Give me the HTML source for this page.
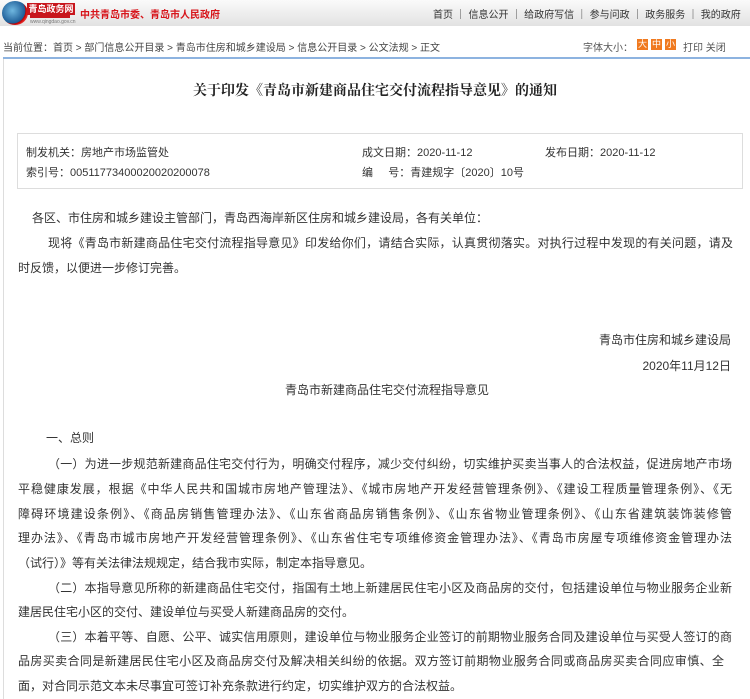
<!DOCTYPE html>
<html><head><meta charset="utf-8">
<style>
*{margin:0;padding:0;box-sizing:border-box}
body{width:750px;height:697px;overflow:hidden;background:#fff;font-family:"Liberation Sans","Noto Sans CJK SC",sans-serif;color:#333;position:relative}
.hdr{position:absolute;left:0;top:0;width:750px;height:26px;background:linear-gradient(#fafafa,#e2e2e2)}
.a{position:absolute;white-space:nowrap}
.ln{position:absolute;left:18px;width:714px;white-space:nowrap;font-size:12px;text-align:justify;text-align-last:justify;line-height:18px}
.s{position:absolute;white-space:nowrap;font-size:12px;line-height:18px}
</style></head><body>
<div class="hdr"></div>
<div class="a" style="left:2px;top:1px;width:26px;height:24px;border-radius:50%;background:radial-gradient(circle at 40% 40%,#6fb7e0,#1d5c96 60%,#b00 62%,#e33 75%,#fff 80%)"></div>
<div class="a" style="left:27px;top:3px;width:48px;height:12px;background:#c8161d;color:#fff;font-size:9px;font-weight:bold;line-height:12px;text-align:center">青岛政务网</div>
<div class="a" style="left:30px;top:15px;width:40px;height:3px;background:#c8161d"></div>
<div class="a" style="left:30px;top:19px;font-size:5px;color:#777">www.qingdao.gov.cn</div>
<div class="a" style="left:80px;top:6px;font-size:10px;font-weight:bold;color:#d7141a">中共青岛市委、青岛市人民政府</div>
<div class="a" style="left:433px;top:6px;font-size:10px;color:#333">首页 ｜ 信息公开 ｜ 给政府写信 ｜ 参与问政 ｜ 政务服务 ｜ 我的政府</div>
<div class="a" style="left:3px;top:39px;font-size:10px;color:#444">当前位置：首页 &gt; 部门信息公开目录 &gt; 青岛市住房和城乡建设局 &gt; 信息公开目录 &gt; 公文法规 &gt; 正文</div>
<div class="a" style="left:583px;top:39px;font-size:10px;color:#555">字体大小：</div>
<div class="a" style="left:637px;top:39px;width:11px;height:11px;background:#f07a20;color:#fff;font-size:9px;line-height:11px;text-align:center">大</div>
<div class="a" style="left:651px;top:39px;width:11px;height:11px;background:#f07a20;color:#fff;font-size:9px;line-height:11px;text-align:center">中</div>
<div class="a" style="left:665px;top:39px;width:11px;height:11px;background:#f07a20;color:#fff;font-size:9px;line-height:11px;text-align:center">小</div>
<div class="a" style="left:683px;top:39px;font-size:10px;color:#555">打印 关闭</div>
<div class="a" style="left:3px;top:57px;width:747px;height:2px;background:#8db3e0"></div>
<div class="a" style="left:3px;top:59px;width:1px;height:640px;background:#ddd"></div>
<div class="a" style="left:0;top:80px;width:750px;text-align:center;font-family:'Liberation Serif','Noto Serif CJK SC',serif;font-weight:bold;font-size:14px;color:#222">关于印发《青岛市新建商品住宅交付流程指导意见》的通知</div>
<div class="a" style="left:17px;top:133px;width:726px;height:56px;border:1px solid #ddd"></div>
<div class="a" style="left:26px;top:144px;font-size:11px;color:#333">制发机关：房地产市场监管处</div>
<div class="a" style="left:26px;top:164px;font-size:11px;color:#333">索引号：00511773400020020200078</div>
<div class="a" style="left:362px;top:144px;font-size:11px;color:#333">成文日期：2020-11-12</div>
<div class="a" style="left:362px;top:164px;font-size:11px;color:#333">编&nbsp;&nbsp;&nbsp;&nbsp;&nbsp;号：青建规字〔2020〕10号</div>
<div class="a" style="left:545px;top:144px;font-size:11px;color:#333">发布日期：2020-11-12</div>

<div class="s" style="left:32px;top:209px">各区、市住房和城乡建设主管部门，青岛西海岸新区住房和城乡建设局，各有关单位：</div>
<div class="ln" style="left:48px;width:685px;top:234px">现将《青岛市新建商品住宅交付流程指导意见》印发给你们，请结合实际，认真贯彻落实。对执行过程中发现的有关问题，请及</div>
<div class="s" style="left:18px;top:259px">时反馈，以便进一步修订完善。</div>
<div class="s" style="right:19px;top:331px">青岛市住房和城乡建设局</div>
<div class="s" style="right:19px;top:357px">2020年11月12日</div>
<div class="s" style="left:285px;top:381px">青岛市新建商品住宅交付流程指导意见</div>

<div class="s" style="left:46px;top:429px">一、总则</div>
<div class="ln" style="left:48px;width:684px;top:455px">（一）为进一步规范新建商品住宅交付行为，明确交付程序，减少交付纠纷，切实维护买卖当事人的合法权益，促进房地产市场</div>
<div class="ln" style="top:480px">平稳健康发展，根据《中华人民共和国城市房地产管理法》、《城市房地产开发经营管理条例》、《建设工程质量管理条例》、《无</div>
<div class="ln" style="top:505px">障碍环境建设条例》、《商品房销售管理办法》、《山东省商品房销售条例》、《山东省物业管理条例》、《山东省建筑装饰装修管</div>
<div class="ln" style="top:529px">理办法》、《青岛市城市房地产开发经营管理条例》、《山东省住宅专项维修资金管理办法》、《青岛市房屋专项维修资金管理办法</div>
<div class="s" style="left:18px;top:554px">（试行）》等有关法律法规规定，结合我市实际，制定本指导意见。</div>
<div class="ln" style="left:48px;width:684px;top:579px">（二）本指导意见所称的新建商品住宅交付，指国有土地上新建居民住宅小区及商品房的交付，包括建设单位与物业服务企业新</div>
<div class="s" style="left:18px;top:603px">建居民住宅小区的交付、建设单位与买受人新建商品房的交付。</div>
<div class="ln" style="left:48px;width:684px;top:628px">（三）本着平等、自愿、公平、诚实信用原则，建设单位与物业服务企业签订的前期物业服务合同及建设单位与买受人签订的商</div>
<div class="ln" style="width:706px;top:652px">品房买卖合同是新建居民住宅小区及商品房交付及解决相关纠纷的依据。双方签订前期物业服务合同或商品房买卖合同应审慎、全</div>
<div class="s" style="left:18px;top:677px">面，对合同示范文本未尽事宜可签订补充条款进行约定，切实维护双方的合法权益。</div>
</body></html>
